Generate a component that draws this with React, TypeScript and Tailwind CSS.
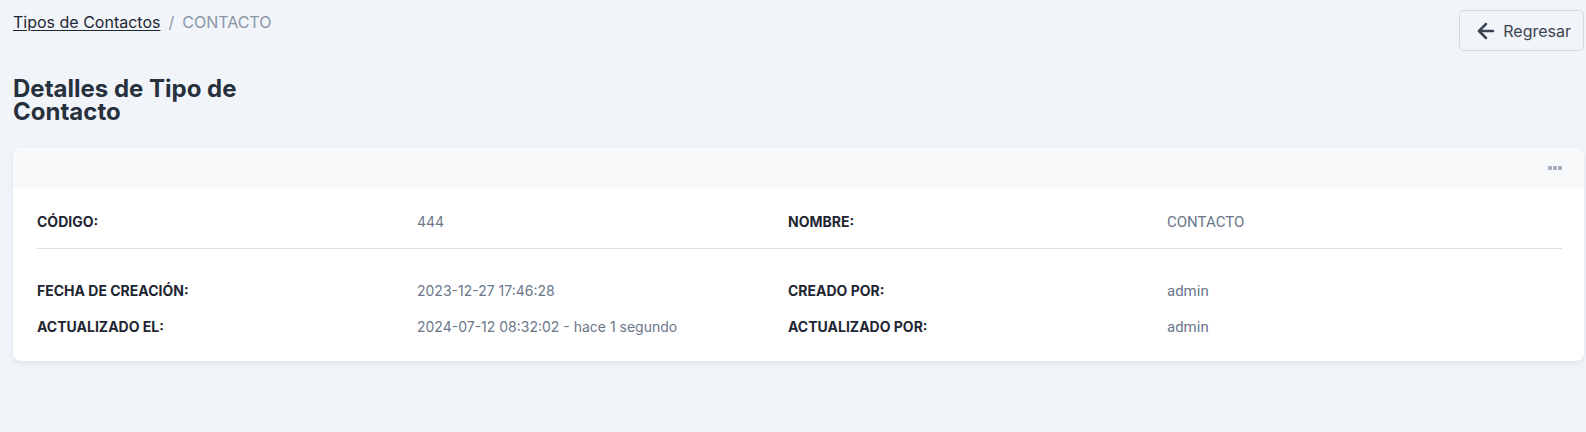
import React from "react";
import { ArrowLeft } from "lucide-react";

interface IDetailRow {
  label: string;
  value: string;
  label2: string;
  value2: string;
}

const Row = ({ label, value, label2, value2 }: IDetailRow) => (
  <div className="grid grid-cols-[380px_371px_379px_1fr] items-center leading-5">
    <div className="text-[14px] font-bold text-[#1f2633]">{label}</div>
    <div className="text-[14px] text-[#6b778a]">{value}</div>
    <div className="text-[14px] font-bold text-[#1f2633]">{label2}</div>
    <div className="font-['Roboto',sans-serif] text-[15px] text-[#6b778a]">{value2}</div>
  </div>
);

const App = () => {
  return (
    <div className="min-h-screen bg-[#f1f4f9] pl-[13px] pr-[2px] pt-[10px] font-['Inter',sans-serif]">
      <div className="flex items-start justify-between">
        <nav className="flex items-center text-[16px] leading-6">
          <a href="#" className="text-[#1f2633] underline underline-offset-2">
            Tipos de Contactos
          </a>
          <span className="mx-[8px] text-[#8a96a8]">/</span>
          <span className="text-[#8a96a8]">CONTACTO</span>
        </nav>
        <button
          type="button"
          className="flex h-[41px] items-center gap-[5px] rounded-[5px] border border-[#d3d9e2] bg-[#f1f4f9] pl-[14px] pr-[12px] text-[16px] text-[#3b4452]"
        >
          <ArrowLeft size={24} strokeWidth={2.5} />
          Regresar
        </button>
      </div>

      <h1 className="mt-[26px] w-[260px] text-[24px] font-bold leading-[23px] text-[#27303d]">
        Detalles de Tipo de Contacto
      </h1>

      <div className="mt-[25px] overflow-hidden rounded-lg bg-white shadow-[0_2px_6px_rgba(30,41,59,0.08)]">
        <div className="flex h-[40px] items-center justify-end bg-[#f8f9fb] pr-[22px]">
          <div className="flex gap-[1px]">
            <span className="h-[4px] w-[4px] rounded-[1px] bg-[#a3adbd]" />
            <span className="h-[4px] w-[4px] rounded-[1px] bg-[#a3adbd]" />
            <span className="h-[4px] w-[4px] rounded-[1px] bg-[#a3adbd]" />
          </div>
        </div>
        <div className="pb-[24px] pl-6 pr-[22px] pt-[24px]">
          <div className="border-b border-[#dcdfe4] pb-[16px]">
            <Row label="CÓDIGO:" value="444" label2="NOMBRE:" value2="CONTACTO" />
          </div>
          <div className="mt-[32px] flex flex-col gap-[16px]">
            <Row
              label="FECHA DE CREACIÓN:"
              value="2023-12-27 17:46:28"
              label2="CREADO POR:"
              value2="admin"
            />
            <Row
              label="ACTUALIZADO EL:"
              value="2024-07-12 08:32:02 - hace 1 segundo"
              label2="ACTUALIZADO POR:"
              value2="admin"
            />
          </div>
        </div>
      </div>
    </div>
  );
};

export default App;
